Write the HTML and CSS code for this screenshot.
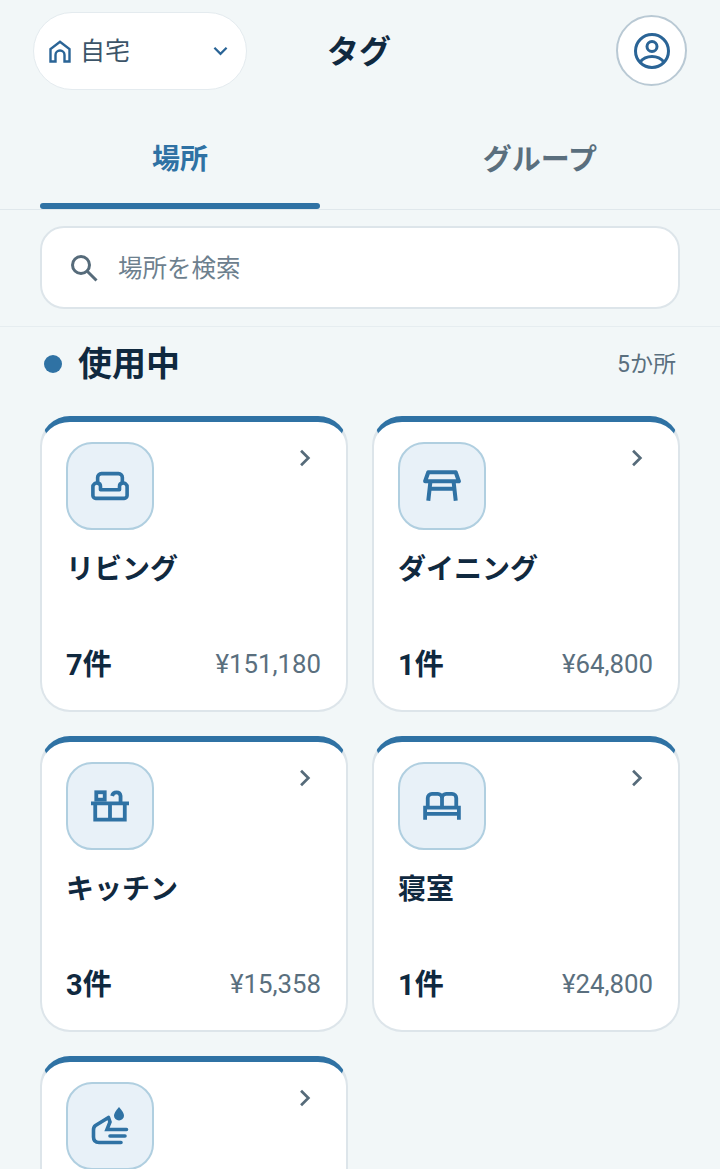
FILE: index.html
```html
<!DOCTYPE html>
<html lang="ja">
<head>
  <meta charset="UTF-8">
  <title>タグ</title>
  <link rel="stylesheet" href="styles.css">
</head>
<body>
  <header class="topbar">
    <div class="home-select">
      <svg class="home-icon" viewBox="0 0 22 23" fill="none" stroke="#2a6496" stroke-width="2.400">
        <path d="M1.500 21.500V9L11 1.700 20.500 9v12.500h-5V15a4.500 4.500 0 0 0-9 0v6.500z"/>
      </svg>
      <span class="home-name">自宅</span>
      <svg class="home-chevron" viewBox="0 0 16 10" fill="none" stroke="#2a6496" stroke-width="2.400">
        <path d="M1.500 1.500 8 8l6.500-6.500"/>
      </svg>
    </div>
    <h1 class="title">タグ</h1>
    <div class="avatar">
      <svg viewBox="0 0 38 38" fill="none" stroke="#2a6496" stroke-width="3">
        <circle cx="19" cy="19" r="16.500"/>
        <circle cx="19" cy="14.500" r="5"/>
        <path d="M7 30c3-3.700 7-5.500 12-5.500s9 1.800 12 5.500"/>
      </svg>
    </div>
  </header>

  <nav class="tabs">
    <div class="tab tab-active">場所</div>
    <div class="tab tab-kana">グループ</div>
  </nav>

  <div class="search-wrap">
    <div class="search">
      <svg class="search-icon" viewBox="0 0 28 28" fill="none" stroke="#566b7a" stroke-width="3">
        <circle cx="11" cy="11" r="8.500"/>
        <path d="m17.500 17.500 9 9"/>
      </svg>
      <span class="search-text">場所を検索</span>
    </div>
  </div>

  <main class="content">
    <div class="section-head">
      <span class="dot"></span>
      <h2 class="section-title">使用中</h2>
      <span class="section-count">5か所</span>
    </div>

    <div class="card-grid">
      <section class="card">
        <div class="card-top">
          <div class="icon-box">
            <svg viewBox="0 0 40 30" fill="none" stroke="#2f72a4" stroke-width="3.800" stroke-linejoin="round">
              <path d="M7 11V6a4 4 0 0 1 4-4h18a4 4 0 0 1 4 4v5"/>
              <path d="M10 19h20v-3.500a3.500 3.500 0 0 1 3-3.500 4 4 0 0 1 5 4v9a3 3 0 0 1-3 3H5a3 3 0 0 1-3-3v-9a4 4 0 0 1 5-4 3.500 3.500 0 0 1 3 3.500z"/>
            </svg>
          </div>
          <svg class="chevron" viewBox="0 0 10 16" fill="none" stroke="#566b7a" stroke-width="2.400"><path d="m1.500 1.500 6.500 6.500-6.500 6.500"/></svg>
        </div>
        <div class="card-name">リビング</div>
        <div class="card-foot"><span class="card-num">7件</span><span class="card-price">¥151,180</span></div>
      </section>

      <section class="card">
        <div class="card-top">
          <div class="icon-box">
            <svg viewBox="0 0 36 30" fill="none" stroke="#2f72a4" stroke-width="3.800" stroke-linejoin="round">
              <path d="M5 2h26l3 8.500H2z"/>
              <path d="M7 11 5 29M29 11l2 18M6 17.500h24"/>
            </svg>
          </div>
          <svg class="chevron" viewBox="0 0 10 16" fill="none" stroke="#566b7a" stroke-width="2.400"><path d="m1.500 1.500 6.500 6.500-6.500 6.500"/></svg>
        </div>
        <div class="card-name">ダイニング</div>
        <div class="card-foot"><span class="card-num">1件</span><span class="card-price">¥64,800</span></div>
      </section>

      <section class="card">
        <div class="card-top">
          <div class="icon-box">
            <svg viewBox="0 0 36 30" fill="none" stroke="#2f72a4" stroke-width="3.600">
              <path d="M0 12.500h36M4 12.500V28h28V12.500M18 12.500V28"/>
              <rect x="5" y="2" width="8" height="7"/>
              <path d="M20 5.500C21 1 27.500 1 28 5.500V12"/>
            </svg>
          </div>
          <svg class="chevron" viewBox="0 0 10 16" fill="none" stroke="#566b7a" stroke-width="2.400"><path d="m1.500 1.500 6.500 6.500-6.500 6.500"/></svg>
        </div>
        <div class="card-name">キッチン</div>
        <div class="card-foot"><span class="card-num">3件</span><span class="card-price">¥15,358</span></div>
      </section>

      <section class="card">
        <div class="card-top">
          <div class="icon-box">
            <svg viewBox="0 0 36 26" fill="none" stroke="#2f72a4" stroke-width="3.600">
              <path d="M2 26V14.500h32V26M2 20.500h32"/>
              <path d="M4.500 14V5.500a4 4 0 0 1 4-4h5a4 4 0 0 1 4.500 4 4 4 0 0 1 4.500-4h5a4 4 0 0 1 4 4V14M18 5.500V14"/>
            </svg>
          </div>
          <svg class="chevron" viewBox="0 0 10 16" fill="none" stroke="#566b7a" stroke-width="2.400"><path d="m1.500 1.500 6.500 6.500-6.500 6.500"/></svg>
        </div>
        <div class="card-name">寝室</div>
        <div class="card-foot"><span class="card-num">1件</span><span class="card-price">¥24,800</span></div>
      </section>

      <section class="card">
        <div class="card-top">
          <div class="icon-box">
            <svg class="icon-tall" viewBox="0 0 36 36" fill="none" stroke="#2f72a4" stroke-width="3.600" stroke-linecap="round">
              <path d="M27 -1c3.500 4 5 6.500 5 8.500a5 5 0 0 1-10 0c0-2 1.500-4.500 5-8.500z" fill="#2f72a4" stroke="none"/>
              <path d="M16.500 9.500 3.500 17.500C2 18.500 1.500 20 1.500 22v7c0 3.500 2 5.500 5.500 5.500h22M16.500 9.500 18 14l-3 7.500h19.500M18 28h15"/>
            </svg>
          </div>
          <svg class="chevron" viewBox="0 0 10 16" fill="none" stroke="#566b7a" stroke-width="2.400"><path d="m1.500 1.500 6.500 6.500-6.500 6.500"/></svg>
        </div>
      </section>
    </div>
  </main>
</body>
</html>
```

FILE: styles.css
```css
* {
  box-sizing: border-box;
}

html, body {
  height: 1169px;
  overflow: hidden;
}

body {
  margin: 0;
  background: #f2f7f8;
  color: #10293f;
  font-family: Roboto, "Noto Sans CJK JP", sans-serif;
}

/* Top bar */
.topbar {
  height: 102px;
  padding: 12px 33px 0 33px;
  display: flex;
  align-items: flex-start;
}

.home-select {
  width: 214px;
  height: 78px;
  padding: 0 18px 0 15px;
  display: flex;
  align-items: center;
  background: #fff;
  border: 1px solid #e4ebef;
  border-radius: 39px;
}
.home-icon {
  width: 22px;
  height: 23px;
}
.home-name {
  margin: -4px 0 0 9px;
  font-size: 25px;
  color: #3c5468;
}
.home-chevron {
  width: 15px;
  height: 10px;
  margin-left: auto;
}

.title {
  margin: 19px 0 0 80px;
  font-size: 32px;
  line-height: 42px;
  font-weight: 700;
  color: #10293f;
}

.avatar {
  width: 71px;
  height: 71px;
  margin: 3px 0 0 auto;
  display: flex;
  align-items: center;
  justify-content: center;
  background: #fff;
  border: 2px solid #b9c9d4;
  border-radius: 50%;
}
.avatar svg {
  width: 38px;
  height: 38px;
}

/* Tabs */
.tabs {
  height: 108px;
  display: flex;
  border-bottom: 1px solid #e0e8ec;
}
.tab {
  flex: 1;
  padding-top: 37px;
  text-align: center;
  font-size: 28px;
  line-height: 42px;
  font-weight: 700;
  color: #5a6f7e;
  position: relative;
}
.tab-kana {
  font-size: 29px;
}
.tab-active {
  color: #2f72a4;
}
.tab-active::after {
  content: '';
  position: absolute;
  left: 40px;
  right: 40px;
  bottom: 0;
  height: 6px;
  background: #2f72a4;
  border-radius: 3px;
}

/* Search */
.search-wrap {
  height: 117px;
  padding: 16px 40px 0 40px;
  border-bottom: 1px solid #e6edf0;
}
.search {
  height: 83px;
  padding-left: 28px;
  display: flex;
  align-items: center;
  background: #fff;
  border: 2px solid #dde5ea;
  border-radius: 24px;
}
.search-icon {
  width: 28px;
  height: 28px;
}
.search-text {
  margin: -2px 0 0 20px;
  font-size: 24.500px;
  color: #6d808e;
}

/* List */
.content {
  padding: 0 40px;
}
.section-head {
  height: 89px;
  padding: 0 4px 15px 4px;
  display: flex;
  align-items: center;
}
.dot {
  width: 18px;
  height: 18px;
  background: #2f72a4;
  border-radius: 50%;
}
.section-title {
  margin: 0 0 0 16px;
  font-size: 34px;
  line-height: 46px;
  font-weight: 700;
}
.section-count {
  margin: 0 0 4px auto;
  font-size: 23px;
  color: #5a6f7e;
}

.card-grid {
  display: grid;
  grid-template-columns: 308px 308px;
  column-gap: 24px;
  row-gap: 24px;
}

.card {
  height: 296px;
  padding: 20px 24px 0 24px;
  background: #fff;
  border: 2px solid #dde5ea;
  border-top: 6px solid #2f72a4;
  border-radius: 30px;
}
.card-top {
  display: flex;
  justify-content: space-between;
  align-items: flex-start;
}
.icon-box {
  width: 88px;
  height: 88px;
  display: flex;
  align-items: center;
  justify-content: center;
  background: #e8f1f8;
  border: 2px solid #b0cfe0;
  border-radius: 26px;
}
.icon-box svg {
  width: 38px;
  height: 32px;
}
.icon-box .icon-tall {
  width: 36px;
  height: 36px;
  overflow: visible;
}
.chevron {
  width: 12px;
  height: 18px;
  margin: 7px 11px 0 0;
}
.card-name {
  margin-top: 19px;
  font-size: 28px;
  line-height: 42px;
  font-weight: 700;
}
.card-foot {
  margin-top: 53px;
  display: flex;
  justify-content: space-between;
  align-items: center;
}
.card-num {
  font-size: 29px;
  line-height: 42px;
  font-weight: 700;
}
.card-price {
  margin: 0 1px 2px 0;
  font-size: 25.800px;
  color: #5a6f7e;
}
```
